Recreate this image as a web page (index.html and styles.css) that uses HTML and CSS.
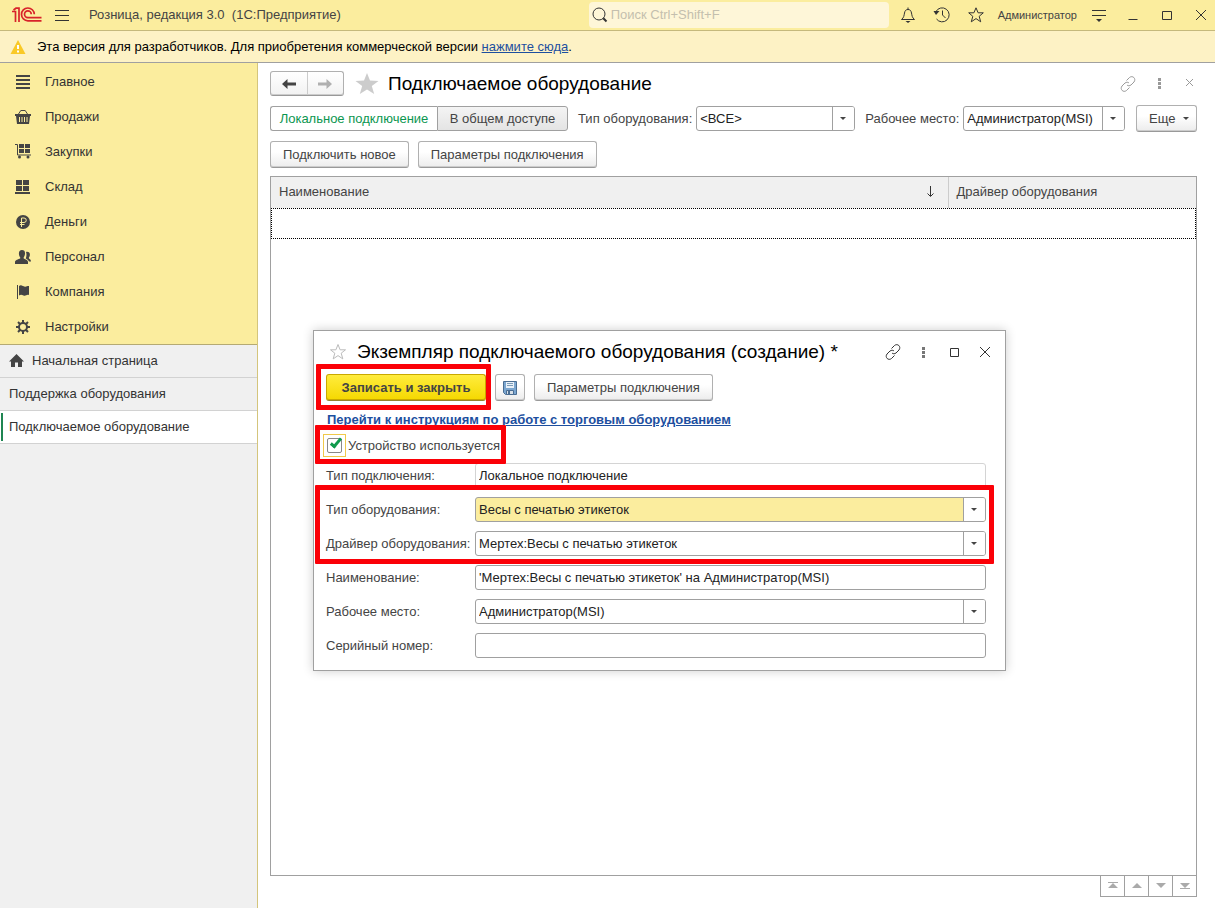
FILE: index.html
```html
<!DOCTYPE html>
<html lang="ru">
<head>
    <meta charset="UTF-8">
    <title>Розница, редакция 3.0</title>
    <link rel="stylesheet" href="styles.css">
</head>
<body>
    <header class="topbar">
        <svg class="logo" width="30" height="16" viewBox="0 0 30 16">
            <path d="M0 4.500h3.500V15M1.500 3L4 1.200h3V15"/>
            <path d="M22.300 7.200a6.400 6.400 0 1 0-6.400 6.600H29.500M19.300 7.200a3.400 3.400 0 1 0-3.400 3.500H29.500"/>
        </svg>
        <button class="icon-btn burger" aria-label="Меню">
            <svg width="16" height="16" viewBox="0 0 16 16"><path d="M1 3.500h14M1 8.500h14M1 13.500h14"/></svg>
        </button>
        <span class="app-name">Розница, редакция 3.0 &nbsp;(1С:Предприятие)</span>
        <label class="search">
            <svg width="18" height="18" viewBox="0 0 18 18"><circle cx="8" cy="8" r="6"/><path class="thick" d="M12.300 12.300l3.200 3.200"/></svg>
            <input type="text" placeholder="Поиск Ctrl+Shift+F" aria-label="Поиск">
        </label>
        <div class="top-tools">
            <button class="icon-btn" aria-label="Уведомления">
                <svg width="18" height="18" viewBox="0 0 18 18"><path d="M2.500 13.500c2.500-2 2.500-4 3-6.500C6 4.500 7 3.500 9 3.500s3 1 3.500 3.500c.5 2.500.5 4.500 3 6.500zM9 1.500v2"/><path class="solid" d="M6.500 15h5L9 17z"/></svg>
            </button>
            <button class="icon-btn" aria-label="История">
                <svg width="18" height="18" viewBox="0 0 18 18"><path d="M3 5.500A7 7 0 1 1 3.500 13M9.500 4.500V9l3 3"/><path class="solid" d="M.5 5h6L3 9z"/></svg>
            </button>
            <button class="icon-btn" aria-label="Избранное">
                <svg width="18" height="18" viewBox="0 0 18 18"><path d="M9 1.800l2.100 5h5.200l-4.100 3.500 1.500 5.500L9 12.600l-4.700 3.200 1.500-5.500L1.700 6.800h5.200z"/></svg>
            </button>
            <span class="user">Администратор</span>
            <button class="icon-btn" aria-label="Сервис">
                <svg width="18" height="18" viewBox="0 0 18 18"><path d="M2 4.500h14M2 9.500h14"/><path class="solid" d="M6 13h6l-3 3z"/></svg>
            </button>
        </div>
        <div class="win-tools">
            <button class="icon-btn" aria-label="Свернуть"><svg width="14" height="14" viewBox="0 0 14 14"><path d="M2.500 11.500h9"/></svg></button>
            <button class="icon-btn" aria-label="Развернуть"><svg width="14" height="14" viewBox="0 0 14 14"><path d="M2.500 3.500h9v8h-9z"/></svg></button>
            <button class="icon-btn" aria-label="Закрыть"><svg width="14" height="14" viewBox="0 0 14 14"><path d="M2 2l10 10M12 2L2 12"/></svg></button>
        </div>
    </header>

    <div class="notice">
        <svg width="16" height="16" viewBox="0 0 16 16"><path fill="#f9c926" d="M8 1l7.500 14H.5z"/><path stroke="#fff" stroke-width="2" d="M8 6v4M8 11.500v2"/></svg>
        <span>Эта версия для разработчиков. Для приобретения коммерческой версии <a href="#">нажмите сюда</a>.</span>
    </div>

    <div class="workspace">
        <aside class="sidebar">
            <nav class="sections">
                <a href="#"><svg width="16" height="16" viewBox="0 0 16 16"><path d="M1 1h14v2H1zM1 5h14v2H1zM1 9h14v2H1zM1 13h14v2H1z"/></svg>Главное</a>
                <a href="#"><svg width="16" height="16" viewBox="0 0 16 16"><path d="M0 5h16v2h-1l-1 8H2L1 7H0z"/><path class="line" d="M3.500 5l2-3M12.500 5l-2-3M5.500 1.500h5"/><path class="cut" d="M4.500 8v5M7 8v5M9.500 8v5M12 8v5"/></svg>Продажи</a>
                <a href="#"><svg width="16" height="16" viewBox="0 0 16 16"><path d="M4 0h5v4H4zM10 0h5v4h-5zM4 5h5v4H4zM10 5h5v4h-5z"/><path class="line" d="M0 .5h2.500v10.500H16"/><circle cx="4.500" cy="13" r="1.500"/><circle cx="13" cy="13" r="1.500"/></svg>Закупки</a>
                <a href="#"><svg width="16" height="16" viewBox="0 0 16 16"><path d="M1 1h6v5H1zM8 1h6v5H8zM1 7h6v5H1zM8 7h6v5H8zM0 13h15v2H0z"/></svg>Склад</a>
                <a href="#"><svg width="16" height="16" viewBox="0 0 16 16"><circle cx="8" cy="8" r="7"/><path class="cut" d="M6.500 13V4h2.500a2.200 2.200 0 0 1 0 4.500H5M5 10.500h4.500"/></svg>Деньги</a>
                <a href="#"><svg width="16" height="16" viewBox="0 0 16 16"><path d="M7 1c2.200 0 3.200 1.500 3 3.700-.1 1.800-.7 2.800-1.300 3.500v1.300c1.500.8 4.300 1.500 4.300 3.500v2H0v-2c0-2 3.500-2.700 5.200-3.500V8.200C4.500 7.500 4 6.500 3.900 4.700 3.800 2.500 4.800 1 7 1z"/><path d="M11 3c2.500-.5 4 .5 3.900 2.800-.1 1.500-.5 2.200-1 2.700v1c1 .7 2.100 1.300 2.100 3h-2c-.5-1.500-2-2.500-3.300-3 .8-1.500 1.100-4.500.3-6.500z"/></svg>Персонал</a>
                <a href="#"><svg width="16" height="16" viewBox="0 0 16 16"><path d="M2 1h1v14H2zM4 2c3-2 4 1.500 7 .5 1.500-.5 2-.5 3-.5v9c-2.500-1-3 1.500-5.500.5-2-1-3-1-4.500 0z"/></svg>Компания</a>
                <a href="#"><svg width="16" height="16" viewBox="0 0 16 16"><circle class="gear" cx="8" cy="8" r="4"/><path class="teeth" d="M8 1v3M8 12v3M1 8h3M12 8h3M3 3l2.200 2.200M10.800 10.800L13 13M13 3l-2.200 2.200M5.200 10.800L3 13"/></svg>Настройки</a>
            </nav>
            <nav class="tabs">
                <a href="#"><svg width="15" height="14" viewBox="0 0 15 14"><path d="M7.500 0l7.500 7.500h-2V13H9V8.500H6V13H2V7.500H0z"/></svg>Начальная страница</a>
                <a href="#">Поддержка оборудования</a>
                <a href="#" class="active">Подключаемое оборудование</a>
            </nav>
        </aside>

        <main class="page">
            <div class="page-head">
                <div class="history">
                    <button aria-label="Назад"><svg width="16" height="12" viewBox="0 0 16 12"><path fill="#444" d="M1 6l5.500-5v3.500H15v3H6.500V11z"/></svg></button>
                    <button aria-label="Вперед"><svg width="16" height="12" viewBox="0 0 16 12"><path fill="#b0b0b0" d="M15 6L9.500 1v3.500H1v3h8.500V11z"/></svg></button>
                </div>
                <svg class="fav" width="24" height="22" viewBox="0 0 24 22"><path fill="#ccc" d="M12 0l3 7.600 8.500.4-6.700 5.100L19.200 21 12 16.500 4.800 21l2.400-7.900L.5 8 9 7.600z"/></svg>
                <h1>Подключаемое оборудование</h1>
                <div class="head-tools muted">
                    <button class="icon-btn" aria-label="Ссылка"><svg width="18" height="18" viewBox="0 0 18 18"><path d="M7.500 5.500l3-3c3-2.500 7 1 4.500 4.500l-3 3c-1.500 1-3 1-4 0M10.500 12.500l-3 3c-3 2.500-7-1-4.500-4.500l3-3c1.500-1 3-1 4 0"/></svg></button>
                    <button class="icon-btn" aria-label="Еще"><svg width="14" height="14" viewBox="0 0 14 14"><path class="dots" d="M5 1h3v3H5zM5 5h3v3H5zM5 9h3v3H5z"/></svg></button>
                    <button class="icon-btn" aria-label="Закрыть"><svg width="14" height="14" viewBox="0 0 14 14"><path d="M3 2l7 7M10 2L3 9"/></svg></button>
                </div>
            </div>

            <div class="filters">
                <div class="switch">
                    <button class="on">Локальное подключение</button>
                    <button>В общем доступе</button>
                </div>
                <label for="f-type">Тип оборудования:</label>
                <div class="combo f-type"><select id="f-type"><option>&lt;ВСЕ&gt;</option></select></div>
                <label for="f-place">Рабочее место:</label>
                <div class="combo f-place"><select id="f-place"><option>Администратор(MSI)</option></select></div>
                <button class="btn more">Еще</button>
            </div>

            <div class="commands">
                <button class="btn">Подключить новое</button>
                <button class="btn">Параметры подключения</button>
            </div>

            <div class="list">
                <table>
                    <thead>
                        <tr>
                            <th><div class="sorted">Наименование<svg width="9" height="12" viewBox="0 0 9 12"><path d="M4.500 0v10M1.500 7.500l3 3 3-3"/></svg></div></th>
                            <th class="driver">Драйвер оборудования</th>
                        </tr>
                    </thead>
                    <tbody>
                        <tr class="current"><td colspan="2"></td></tr>
                    </tbody>
                </table>
            </div>
            <div class="pager">
                <button aria-label="В начало"><svg width="10" height="8" viewBox="0 0 10 8"><path d="M0 0h10v1H0zM5 1l5 5H0z"/></svg></button>
                <button aria-label="Вверх"><svg width="10" height="8" viewBox="0 0 10 8"><path d="M5 1l5 5H0z"/></svg></button>
                <button aria-label="Вниз"><svg width="10" height="8" viewBox="0 0 10 8"><path d="M0 1h10L5 6z"/></svg></button>
                <button aria-label="В конец"><svg width="10" height="8" viewBox="0 0 10 8"><path d="M0 1h10L5 6zM0 6h10v1H0z"/></svg></button>
            </div>

            <section class="dialog" role="dialog" aria-labelledby="dlg-title">
                <div class="dialog-head">
                    <svg class="fav-small" width="18" height="18" viewBox="0 0 18 18"><path d="M9 1.500l2.100 5.300h5.400l-4.300 3.400 1.600 5.700L9 12.600l-4.800 3.300 1.600-5.700L1.500 6.800h5.400z"/></svg>
                    <h2 id="dlg-title">Экземпляр подключаемого оборудования (создание) *</h2>
                    <div class="head-tools">
                        <button class="icon-btn" aria-label="Ссылка"><svg width="18" height="18" viewBox="0 0 18 18"><path d="M7.500 5.500l3-3c3-2.500 7 1 4.500 4.500l-3 3c-1.500 1-3 1-4 0M10.500 12.500l-3 3c-3 2.500-7-1-4.500-4.500l3-3c1.500-1 3-1 4 0"/></svg></button>
                        <button class="icon-btn" aria-label="Еще"><svg width="14" height="14" viewBox="0 0 14 14"><path class="dots" d="M4 2h3v3H4zM4 6h3v3H4zM4 10h3v3H4z"/></svg></button>
                        <button class="icon-btn" aria-label="Развернуть"><svg width="14" height="14" viewBox="0 0 14 14"><path d="M2.500 3.500h8v8h-8z"/></svg></button>
                        <button class="icon-btn" aria-label="Закрыть"><svg width="14" height="14" viewBox="0 0 14 14"><path d="M2 2l10 10M12 2L2 12"/></svg></button>
                    </div>
                </div>
                <div class="dialog-commands">
                    <div class="marked mark-save"><button class="btn primary">Записать и закрыть</button></div>
                    <button class="btn save" aria-label="Записать">
                        <svg width="16" height="16" viewBox="0 0 16 16"><path fill="#7ba6d0" stroke="#4a6d92" d="M1.500 1.500h13v13h-11l-2-2z"/><path fill="#e8f0f8" d="M4 2h8v6H4z"/><path stroke="#7c9cb8" d="M5 3.500h6M5 5.500h6"/><path fill="#d8e0e8" stroke="#4a6d92" d="M4.500 10.500h7v4h-7z"/><path fill="#4a6d92" d="M6 11h2v3H6z"/></svg>
                    </button>
                    <button class="btn">Параметры подключения</button>
                </div>
                <a class="guide" href="#">Перейти к инструкциям по работе с торговым оборудованием</a>
                <div class="marked mark-used">
                    <label class="used"><span class="tick"><input type="checkbox" checked></span>Устройство используется</label>
                </div>
                <div class="fields">
                    <div class="field">
                        <label for="d-conn">Тип подключения:</label>
                        <input class="readonly" id="d-conn" type="text" value="Локальное подключение" readonly>
                    </div>
                    <div class="marked mark-type">
                        <div class="field">
                            <label for="d-type">Тип оборудования:</label>
                            <div class="combo filled"><select id="d-type"><option>Весы с печатью этикеток</option></select></div>
                        </div>
                        <div class="field">
                            <label for="d-driver">Драйвер оборудования:</label>
                            <div class="combo"><select id="d-driver"><option>Мертех:Весы с печатью этикеток</option></select></div>
                        </div>
                    </div>
                    <div class="field">
                        <label for="d-name">Наименование:</label>
                        <input id="d-name" type="text" value="'Мертех:Весы с печатью этикеток' на Администратор(MSI)">
                    </div>
                    <div class="field">
                        <label for="d-place">Рабочее место:</label>
                        <div class="combo"><select id="d-place"><option>Администратор(MSI)</option></select></div>
                    </div>
                    <div class="field">
                        <label for="d-serial">Серийный номер:</label>
                        <input id="d-serial" type="text">
                    </div>
                </div>
            </section>
        </main>
    </div>
</body>
</html>
```
FILE: styles.css
```css
:root {
    --yellow: #fbed9e;
    --line: #a0a0a0;
    --text: #444;
    --mark: #fb0007;
}

* {
    box-sizing: border-box;
}

body {
    margin: 0;
    min-height: 100vh;
    display: flex;
    flex-direction: column;
    background: #fff;
    color: var(--text);
    font-family: "Liberation Sans", Arial, sans-serif;
    font-size: 13px;
    line-height: 16px;
}

button, input, select {
    font: inherit;
    color: inherit;
}

button {
    cursor: pointer;
}

svg {
    flex: none;
    display: block;
}

h1, h2 {
    margin: 0;
    color: #000;
    font-size: 19px;
    line-height: 24px;
    font-weight: normal;
    white-space: nowrap;
}

.icon-btn {
    padding: 0;
    border: none;
    background: none;
}

.icon-btn svg,
.search svg {
    fill: none;
    stroke: #333;
}

.icon-btn .solid {
    fill: #333;
    stroke: none;
}

.icon-btn .dots {
    fill: #777;
    stroke: none;
}

.search .thick {
    stroke-width: 2;
}

/* top bar */
.topbar {
    display: flex;
    align-items: center;
    height: 31px;
    padding: 0 7px 0 12px;
    background: var(--yellow);
    border-bottom: 1px solid #c5b97c;
}

.logo {
    fill: none;
    stroke: #d8232a;
    stroke-width: 1.7;
}

.burger {
    margin: 0 19px 0 12px;
}

.app-name {
    flex: 1;
    white-space: nowrap;
}

.search {
    display: flex;
    align-items: center;
    gap: 2px;
    width: 300px;
    height: 26px;
    padding-left: 2px;
    border-radius: 4px;
    background: #fef6d8;
}

.search input {
    flex: 1;
    min-width: 0;
    padding: 0;
    border: none;
    outline: none;
    background: none;
}

.search input::placeholder {
    color: #c4bfae;
}

.top-tools {
    display: flex;
    align-items: center;
    gap: 16px;
    margin-left: 10px;
}

.user {
    margin: 0 -3px;
    font-size: 11px;
}

.win-tools {
    display: flex;
    gap: 20px;
    margin-left: 18px;
}

.notice {
    display: flex;
    align-items: center;
    gap: 11px;
    height: 32px;
    padding: 0 10px;
    background: #fdf2c5;
    border-bottom: 1px solid var(--line);
    color: #000;
}

.notice a {
    color: #1d4f9f;
}

.workspace {
    flex: 1;
    display: flex;
}

/* left panel */
.sidebar {
    width: 258px;
    flex: none;
    background: #f0f0f0;
    border-right: 1px solid #d4c57c;
}

.sidebar a {
    display: flex;
    align-items: center;
    color: #333;
    text-decoration: none;
}

.sections {
    padding-top: 1px;
    background: var(--yellow);
    border-bottom: 1px solid #b5aa73;
}

.sections a {
    gap: 14px;
    height: 35px;
    padding-left: 15px;
}

.sidebar svg {
    fill: #444;
}

.sections .line {
    fill: none;
    stroke: #444;
}

.sections .cut {
    fill: none;
    stroke: var(--yellow);
}

.sections .gear {
    fill: none;
    stroke: #444;
    stroke-width: 2;
}

.sections .teeth {
    stroke: #444;
    stroke-width: 2;
}

.tabs a {
    gap: 8px;
    height: 33px;
    padding-left: 9px;
    border-bottom: 1px solid #d2d2d2;
}

.tabs .active {
    background: #fff linear-gradient(#1f8552, #1f8552) 1px 50% / 2px 28px no-repeat;
}

/* list page */
.page {
    position: relative;
    flex: 1;
    min-width: 0;
    display: flex;
    flex-direction: column;
    padding: 8px 18px 11px 12px;
}

.page-head {
    display: flex;
    align-items: center;
    height: 25px;
}

.history {
    display: flex;
    width: 74px;
    height: 25px;
    border: 1px solid #b0b0b0;
    border-bottom-color: #999;
    border-radius: 3px;
    background: linear-gradient(#fff, #f2f2f2);
    box-shadow: inset 0 -1px #ccc;
}

.history button {
    flex: 1;
    display: flex;
    align-items: center;
    justify-content: center;
    padding: 0;
    border: none;
    background: none;
}

.history button + button {
    border-left: 1px solid #ccc;
}

.fav {
    margin: 0 9px 0 11px;
}

.head-tools {
    display: flex;
    align-items: center;
    gap: 16px;
    margin-left: auto;
}

.muted svg {
    stroke: #999;
}

.muted .dots {
    fill: #999;
}

.filters {
    display: flex;
    align-items: center;
    margin-top: 9px;
    white-space: nowrap;
}

.filters label {
    margin: 0 4px 0 10px;
}

.switch {
    display: flex;
    width: 298px;
    height: 25px;
}

.switch button {
    flex: 1;
    padding: 0;
    border: 1px solid var(--line);
    border-radius: 0 3px 3px 0;
    background: linear-gradient(#f4f4f4, #e4e4e4);
}

.switch .on {
    flex: 0 0 167px;
    border-right: none;
    border-radius: 3px 0 0 3px;
    background: #fff;
    color: #0c9650;
}

.combo {
    position: relative;
    height: 25px;
    border: 1px solid var(--line);
    border-radius: 3px;
    background: #fff;
    color: #222;
}

.combo select {
    position: relative;
    display: block;
    width: 100%;
    height: 100%;
    padding: 0 24px 0 3px;
    border: none;
    border-radius: 3px;
    outline: none;
    background: none;
    appearance: none;
}

.combo::before {
    content: "";
    position: absolute;
    top: 0;
    right: 0;
    bottom: 0;
    width: 21px;
    border-left: 1px solid var(--line);
    border-radius: 0 2px 2px 0;
    background: #fff;
    pointer-events: none;
}

.combo::after,
.more::after {
    content: "";
    border: 3px solid transparent;
    border-top-color: #444;
    border-bottom: none;
}

.combo::after {
    position: absolute;
    top: 10px;
    right: 8px;
    pointer-events: none;
}

.filled {
    background: #fbed9e;
}

.f-type {
    width: 159px;
}

.f-place {
    width: 162px;
}

.btn {
    height: 27px;
    padding: 0 12px;
    border: 1px solid #b0b0b0;
    border-bottom-color: #999;
    border-radius: 3px;
    background: linear-gradient(#fff 40%, #ececec);
    box-shadow: inset 0 -1px #ccc;
    white-space: nowrap;
}

.more {
    display: flex;
    align-items: center;
    gap: 8px;
    width: 61px;
    margin-left: auto;
}

.commands {
    display: flex;
    gap: 9px;
    margin-top: 9px;
}

.list {
    flex: 1;
    margin-top: 8px;
    border: 1px solid var(--line);
}

.list table {
    width: 100%;
    border-collapse: collapse;
    table-layout: fixed;
}

.list th {
    height: 31px;
    padding: 0 8px 2px;
    background: #f0f0f0;
    font-weight: normal;
    text-align: left;
}

.list .driver {
    width: 248px;
    border-left: 1px solid #ccc;
}

.sorted {
    display: flex;
    align-items: center;
    justify-content: space-between;
    padding-right: 5px;
}

.sorted svg {
    fill: none;
    stroke: #333;
}

.current td {
    height: 31px;
    padding: 0;
    outline: 1px dotted #000;
    outline-offset: -1px;
}

.pager {
    display: flex;
    align-self: flex-end;
    border: 1px solid var(--line);
    border-top: none;
}

.pager button {
    display: flex;
    align-items: center;
    justify-content: center;
    width: 24px;
    height: 20px;
    padding: 0;
    border: none;
    border-left: 1px solid var(--line);
    background: #fff;
}

.pager button:first-child {
    width: 23px;
    border-left: none;
}

.pager svg {
    fill: #aaa;
}

/* item dialog, floats over the list */
.dialog {
    position: absolute;
    top: 267px;
    left: 55px;
    right: 209px;
    padding: 9px 19px 12px 12px;
    border: 1px solid var(--line);
    background: #fff;
    box-shadow: 0 0 10px rgba(0, 0, 0, 0.2);
}

.dialog-head {
    display: flex;
    align-items: center;
    gap: 10px;
    height: 24px;
    padding-left: 3px;
}

.dialog-head .head-tools {
    margin-right: -6px;
}

.fav-small {
    fill: none;
    stroke: #bbb;
}

.dialog-commands {
    display: flex;
    gap: 9px;
    margin-top: 10px;
}

.primary {
    width: 160px;
    padding: 0;
    border-color: #c9a800;
    border-bottom-color: #96822a;
    background: linear-gradient(#ffec3d, #f5d800);
    box-shadow: inset 0 -1px #c9a800;
    font-weight: bold;
}

.save {
    padding: 0 6px;
}

.guide {
    display: block;
    margin-top: 11px;
    padding-left: 1px;
    color: #1d4f9f;
    font-weight: bold;
}

.used {
    display: flex;
    align-items: center;
    gap: 2px;
    margin-left: -3px;
}

.tick {
    padding: 3px;
    border: 1px solid #f0c94a;
}

.tick input {
    display: block;
    width: 15px;
    height: 15px;
    margin: 0;
    border: 1px solid #888;
    border-radius: 2px;
    appearance: none;
    position: relative;
}

.tick input:checked::after {
    content: "";
    position: absolute;
    left: 5px;
    top: -3px;
    width: 6px;
    height: 12px;
    border: solid #109a4c;
    border-width: 0 3px 3px 0;
    box-sizing: border-box;
    transform: rotate(40deg);
}

.marked {
    position: relative;
}

.marked::after {
    content: "";
    position: absolute;
    border: 5px solid var(--mark);
    border-radius: 1px;
    pointer-events: none;
    z-index: 1;
}

.mark-save::after {
    inset: -10px -5px -9px -10px;
}

.mark-used {
    width: fit-content;
    margin-top: 6px;
}

.mark-used::after {
    inset: -9px -6px -7px -11px;
}

.mark-type::after {
    inset: -12px -8px -8px -11px;
}

.fields,
.mark-type {
    display: grid;
    gap: 9px;
}

.fields {
    margin-top: 6px;
}

.field {
    display: grid;
    grid-template-columns: 149px 1fr;
    align-items: center;
}

.field label {
    white-space: nowrap;
}

.field input {
    width: 100%;
    min-width: 0;
    height: 25px;
    padding: 0 3px;
    border: 1px solid var(--line);
    border-radius: 3px;
    color: #222;
}

.field .readonly {
    border-color: #d4d4d4;
}
```
